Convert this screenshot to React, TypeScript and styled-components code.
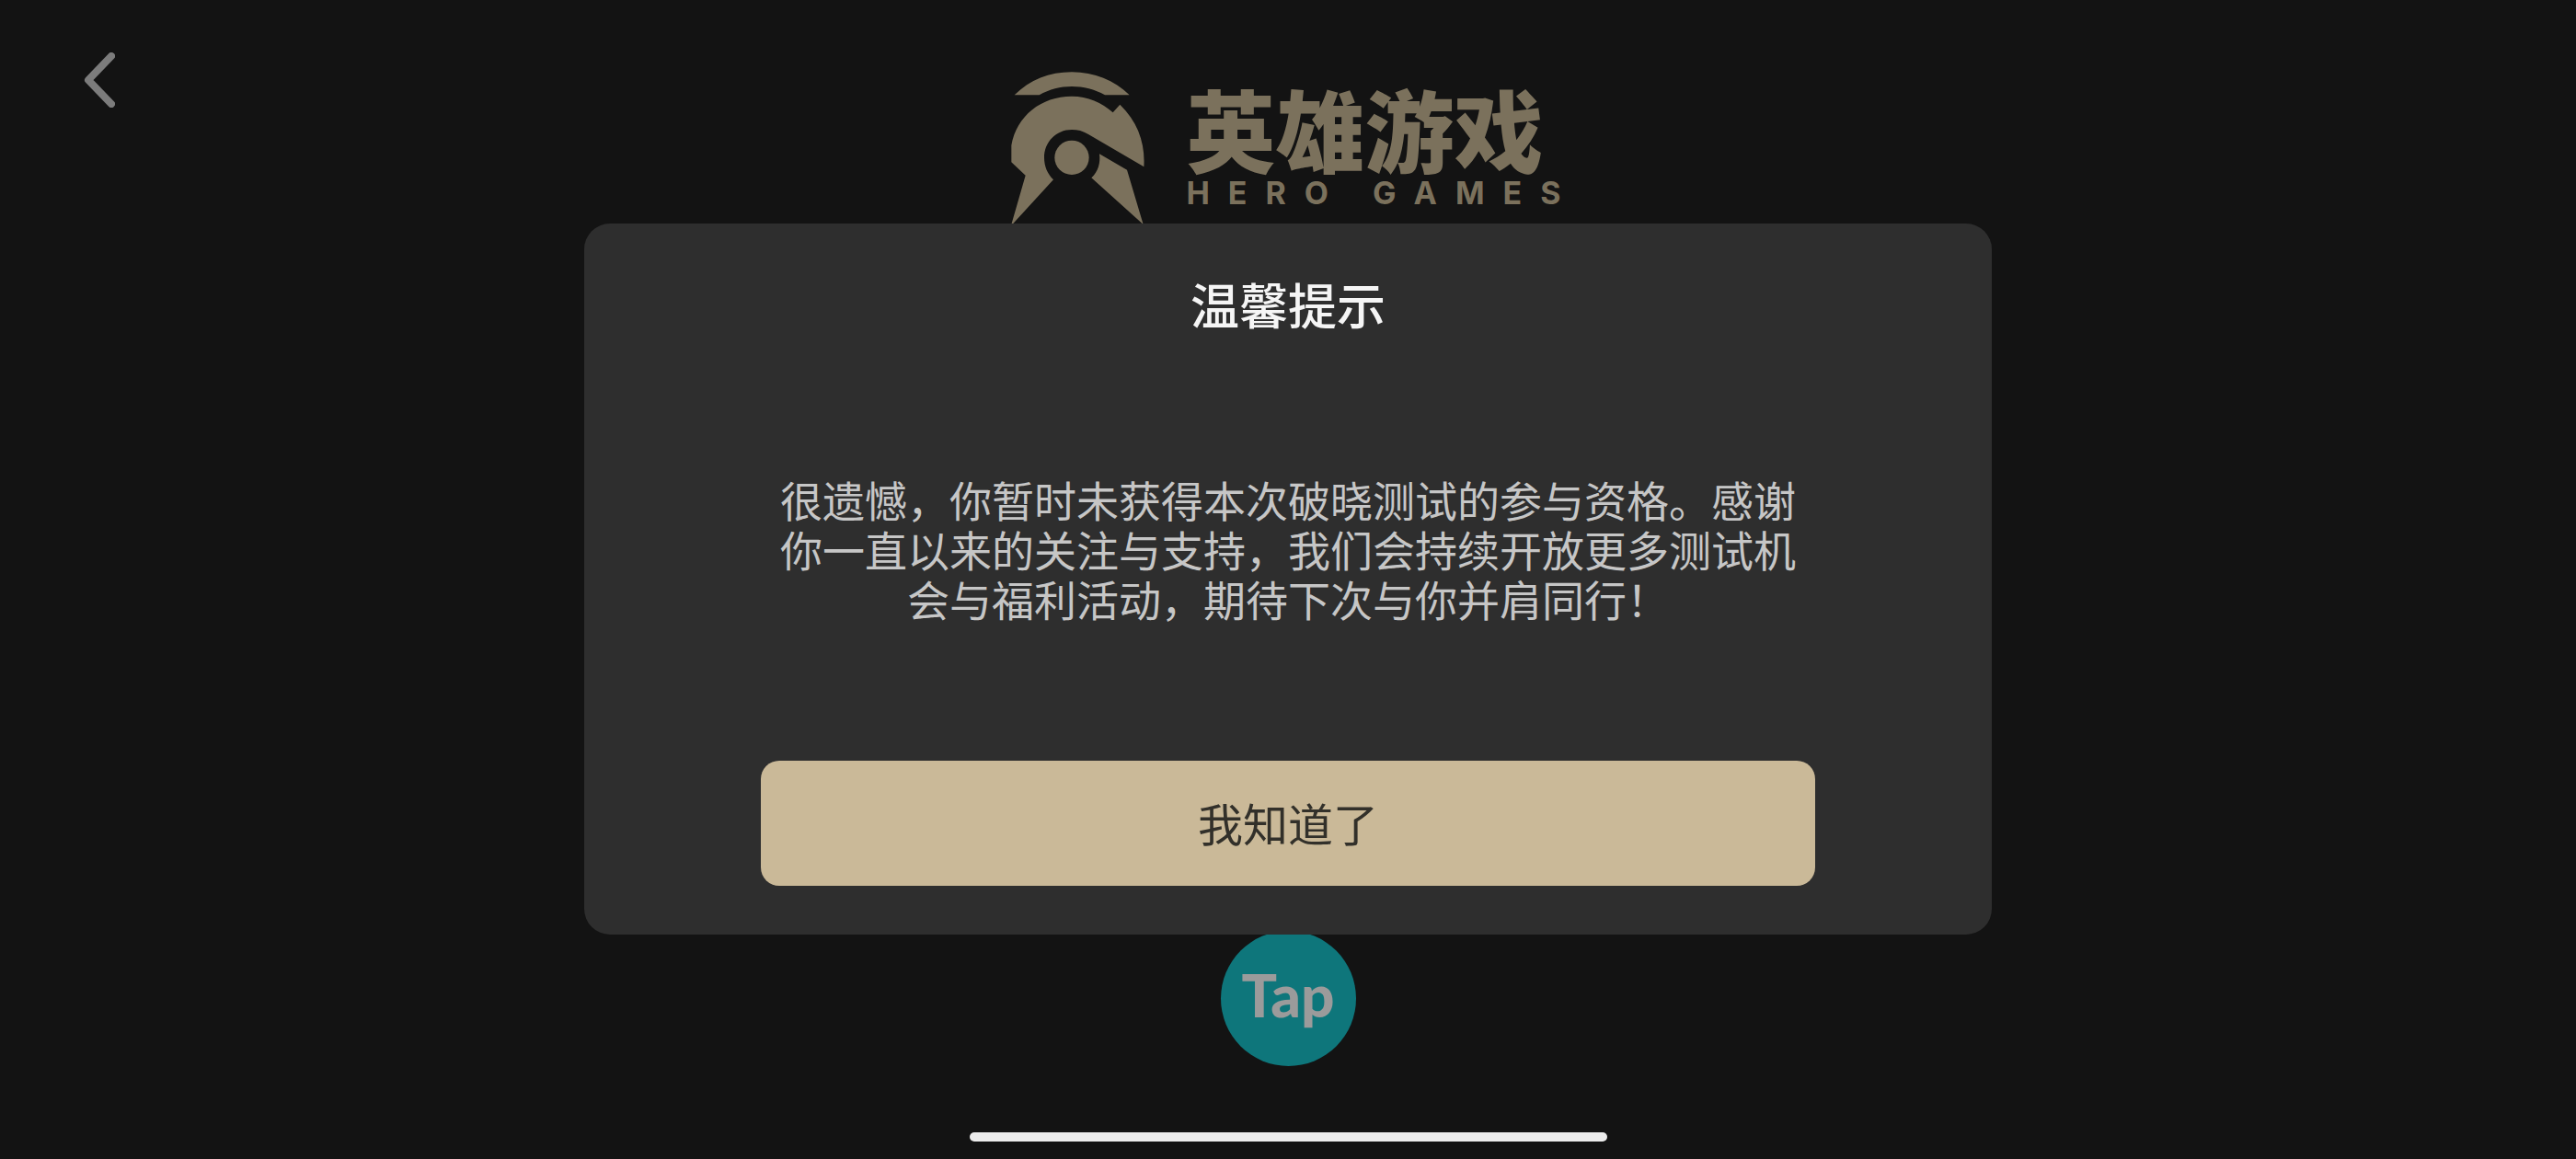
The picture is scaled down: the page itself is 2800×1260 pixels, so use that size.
import React, { useState } from "react";
import styled, { createGlobalStyle } from "styled-components";

const GlobalStyle = createGlobalStyle`
  * { box-sizing: border-box; }
  body {
    margin: 0;
    background: #131313;
    font-family: "Noto Sans CJK SC", "Noto Sans", sans-serif;
  }
  button { font: inherit; border: 0; cursor: pointer; }
`;

const Page = styled.main`
  display: flex;
  flex-direction: column;
  min-height: 100vh;
  background: #131313;
`;

const Header = styled.header`
  display: grid;
  grid-template-columns: 1fr auto 1fr;
  align-items: start;
  padding: 43px 64px 0;
`;

const BackButton = styled.button`
  display: grid;
  place-items: center;
  justify-self: start;
  width: 88px;
  height: 88px;
  padding: 0;
  background: transparent;
  color: #7c7c7c;
`;

const Brand = styled.div`
  display: flex;
  gap: 45px;
  margin-top: 35px;
  color: #7b715c;
`;

const Wordmark = styled.div`
  display: flex;
  flex-direction: column;
  gap: 8px;
  padding-top: 12px;
`;

const BrandName = styled.span`
  font-size: 97px;
  font-weight: 900;
  line-height: 96px;
`;

const BrandLatin = styled.span`
  margin-right: -16px;
  font-family: Inter, "Liberation Sans", sans-serif;
  font-size: 34px;
  font-weight: 700;
  line-height: 32px;
  letter-spacing: 20px;
`;

const Footer = styled.footer`
  display: flex;
  flex-direction: column;
  align-items: center;
  gap: 72px;
  margin-top: auto;
  padding-bottom: 19px;
`;

const TapButton = styled.button`
  width: 147px;
  height: 147px;
  padding: 0 0 8px;
  border-radius: 50%;
  background: #0e767b;
  color: #9b9b9b;
  && {
    font-family: Lato, sans-serif;
    font-size: 64px;
    font-weight: 900;
    line-height: 64px;
  }
`;

const HomeIndicator = styled.div`
  width: 693px;
  max-width: 60%;
  height: 10px;
  border-radius: 5px;
  background: #ececec;
`;

const Overlay = styled.div`
  position: fixed;
  inset: 0;
  display: flex;
  align-items: center;
  justify-content: center;
  padding-bottom: 2px;
`;

const Dialog = styled.section`
  display: flex;
  flex-direction: column;
  align-items: center;
  width: 1530px;
  max-width: 92%;
  padding: 60px 24px 53px;
  border-radius: 28px;
  background: #2e2e2e;
`;

const Title = styled.h1`
  margin: 0;
  color: #f5f5f5;
  font-size: 53px;
  font-weight: 500;
  line-height: 54px;
`;

const Message = styled.p`
  max-width: 1104px;
  margin: 158px 0 150px;
  color: #c6c6c6;
  font-size: 46px;
  line-height: 54px;
  text-align: center;
`;

const ConfirmButton = styled.button`
  width: 1146px;
  max-width: 100%;
  height: 136px;
  padding: 0 0 2px;
  border-radius: 20px;
  background: #cab998;
  color: #32302a;
  && {
    font-size: 49px;
  }
`;

const BackIcon = () => (
  <svg width="34" height="60" viewBox="0 0 34 60" fill="none" aria-hidden="true">
    <path d="M30 4 L5 30 L30 56" stroke="currentColor" strokeWidth="8" strokeLinecap="round" strokeLinejoin="round" />
  </svg>
);

const HelmetIcon = () => (
  <svg width="145" height="166" viewBox="26 22 435 498" fill="currentColor" aria-hidden="true">
    <path d="M37 98 C88 48 150 23 224 23 C298 23 362 50 412 98 H332 C298 79 262 70 224 70 C186 70 152 79 118 98 Z" />
    <path d="M27 262 C44 166 124 102 224 102 C276 102 322 122 358 155 L381 129 C440 186 464 256 459 332 L278 226 C260 215 243 211 224 211 C172 211 134 252 134 302 C134 331 145 356 164 374 L30 520 H27 L73 360 L27 317 Z" />
    <path d="M314 290 L404 342 L457 520 L288 368 C310 348 318 320 314 290 Z" />
    <circle cx="224" cy="302" r="56" />
  </svg>
);

export default function App() {
  const [open, setOpen] = useState(true);
  return (
    <>
      <GlobalStyle />
      <Page>
        <Header>
          <BackButton type="button" aria-label="返回">
            <BackIcon />
          </BackButton>
          <Brand>
            <HelmetIcon />
            <Wordmark>
              <BrandName>英雄游戏</BrandName>
              <BrandLatin>HERO GAMES</BrandLatin>
            </Wordmark>
          </Brand>
        </Header>
        <Footer>
          <TapButton type="button">Tap</TapButton>
          <HomeIndicator />
        </Footer>
      </Page>
      {open && (
        <Overlay>
          <Dialog role="dialog" aria-modal="true" aria-labelledby="notice-title">
            <Title id="notice-title">温馨提示</Title>
            <Message>
              很遗憾，你暂时未获得本次破晓测试的参与资格。感谢你一直以来的关注与支持，我们会持续开放更多测试机会与福利活动，期待下次与你并肩同行！
            </Message>
            <ConfirmButton type="button" onClick={() => setOpen(false)}>
              我知道了
            </ConfirmButton>
          </Dialog>
        </Overlay>
      )}
    </>
  );
}
